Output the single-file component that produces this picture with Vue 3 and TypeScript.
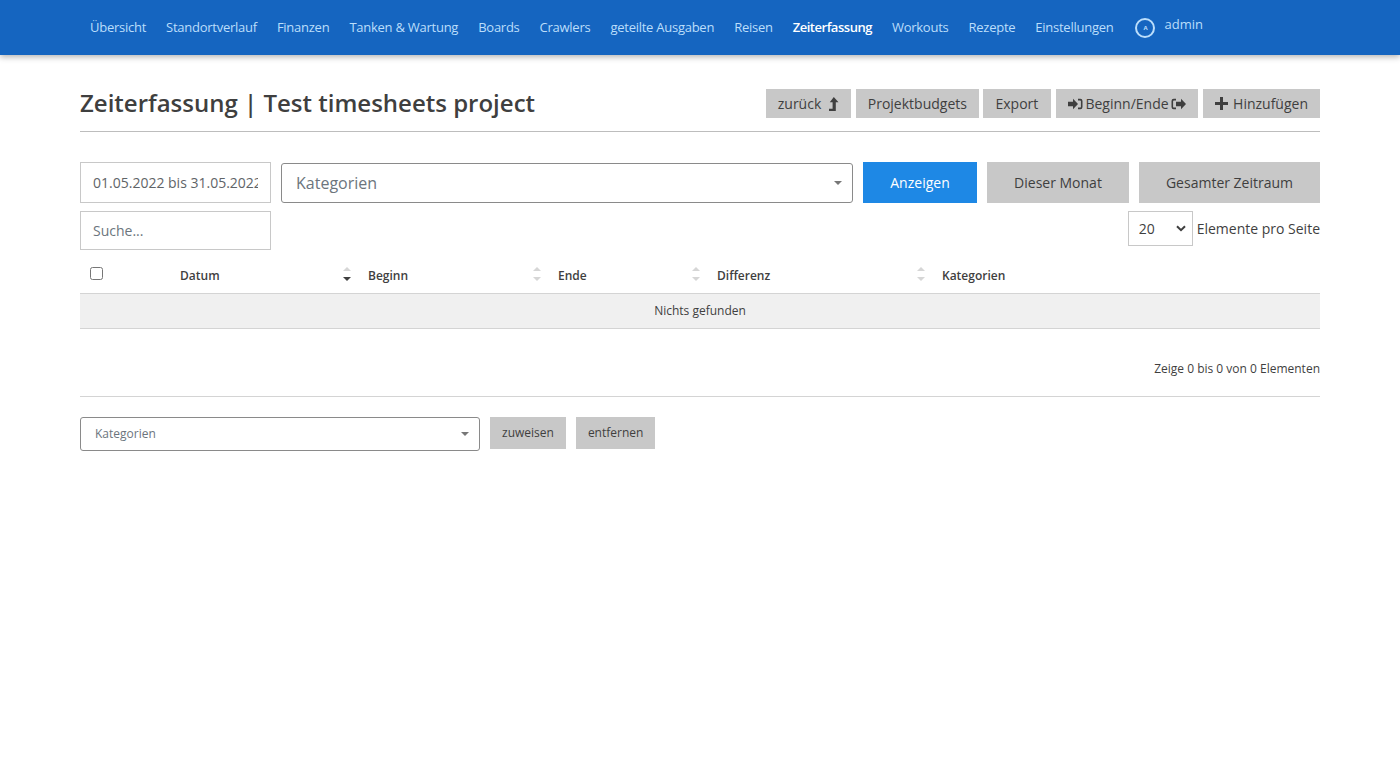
<template>
  <nav class="topbar">
    <div class="nav-inner">
      <a
        v-for="link in navLinks"
        :key="link"
        class="nav-link"
        :class="{ active: link === 'Zeiterfassung' }"
        href="#"
      >{{ link }}</a>
      <a class="nav-user" href="#">
        <span class="avatar">A</span>
        <span class="user-name">admin</span>
      </a>
    </div>
  </nav>

  <main class="page">
    <header class="page-head">
      <h1>Zeiterfassung | Test timesheets project</h1>
      <div class="head-actions">
        <button class="btn">
          zurück
          <svg class="ico ico-back" width="11" height="14" viewBox="0 0 11 14"><path d="M5.800 0 10.500 5.200H7.800V14H1V11.800H4.600V5.200H1.800z" fill="#3f3f3f" /></svg>
        </button>
        <button class="btn">Projektbudgets</button>
        <button class="btn btn-export">Export</button>
        <button class="btn btn-range">
          <svg class="ico" width="15" height="12" viewBox="0 0 15 12">
            <path d="M0 3.800h5V.8L10 6l-5 5.200v-3H0z" fill="#3f3f3f" />
            <path d="M10 .8h2.300q2.200 0 2.200 2.200v6q0 2.200-2.200 2.200H10V9.600h2q.9 0 .9-.9V3.300q0-.9-.9-.9h-2z" fill="#3f3f3f" />
          </svg>
          Beginn/Ende
          <svg class="ico" width="15" height="12" viewBox="0 0 15 12">
            <path d="M5 3.800h5V.8L15 6l-5 5.200v-3H5z" fill="#3f3f3f" />
            <path d="M5 .8H2.700Q.5.800.5 3v6q0 2.200 2.200 2.200H5V9.600H3q-.9 0-.9-.9V3.300q0-.9.9-.9h2z" fill="#3f3f3f" />
          </svg>
        </button>
        <button class="btn btn-add">
          <svg class="ico" width="13" height="13" viewBox="0 0 13 13"><path d="M5 0h3v5h5v3H8v5H5V8H0V5h5z" fill="#3f3f3f" /></svg>
          Hinzufügen
        </button>
      </div>
    </header>

    <section class="filters">
      <input class="date-input" type="text" value="01.05.2022 bis 31.05.2022" />
      <div class="select2 select-large">
        <span>Kategorien</span>
        <i class="caret"></i>
      </div>
      <button class="btn btn-lg btn-primary show-btn">Anzeigen</button>
      <button class="btn btn-lg month-btn">Dieser Monat</button>
      <button class="btn btn-lg all-btn">Gesamter Zeitraum</button>
    </section>

    <section class="toolbar">
      <input class="search-input" type="text" placeholder="Suche..." />
      <label class="page-size">
        <span class="select-wrap">
          <select>
            <option>20</option>
          </select>
          <svg class="chevron" width="10" height="7" viewBox="0 0 10 7"><path d="M1 1.200 5 5.200 9 1.200" fill="none" stroke="#3f3f3f" stroke-width="2" /></svg>
        </span>
        Elemente pro Seite
      </label>
    </section>

    <table class="grid">
      <colgroup>
        <col v-for="col in columns" :key="col.key" :style="{ width: col.width + 'px' }" />
      </colgroup>
      <thead>
        <tr>
          <th v-for="col in columns" :key="col.key" :class="{ 'check-col': col.key === 'check' }">
            <input v-if="col.key === 'check'" type="checkbox" />
            <template v-else>
              {{ col.label }}
              <span v-if="col.sortable" class="sort">
                <i class="up"></i>
                <i class="down" :class="{ on: col.key === 'date' }"></i>
              </span>
            </template>
          </th>
        </tr>
      </thead>
      <tbody>
        <tr>
          <td :colspan="columns.length">Nichts gefunden</td>
        </tr>
      </tbody>
    </table>

    <p class="summary">Zeige 0 bis 0 von 0 Elementen</p>

    <section class="assign">
      <div class="select2 select-small">
        <span>Kategorien</span>
        <i class="caret"></i>
      </div>
      <button class="btn btn-sm">zuweisen</button>
      <button class="btn btn-sm">entfernen</button>
    </section>
  </main>
</template>

<script setup lang="ts">
interface Column {
  key: string;
  label: string;
  width: number;
  sortable: boolean;
}

const navLinks: string[] = [
  'Übersicht',
  'Standortverlauf',
  'Finanzen',
  'Tanken & Wartung',
  'Boards',
  'Crawlers',
  'geteilte Ausgaben',
  'Reisen',
  'Zeiterfassung',
  'Workouts',
  'Rezepte',
  'Einstellungen',
];

const columns: Column[] = [
  { key: 'check', label: '', width: 88, sortable: false },
  { key: 'date', label: 'Datum', width: 188, sortable: true },
  { key: 'start', label: 'Beginn', width: 190, sortable: true },
  { key: 'end', label: 'Ende', width: 159, sortable: true },
  { key: 'diff', label: 'Differenz', width: 225, sortable: true },
  { key: 'cats', label: 'Kategorien', width: 390, sortable: false },
];
</script>

<style>
body {
  background: #fff;
}
</style>

<style scoped>
* {
  box-sizing: border-box;
}

.topbar {
  height: 55px;
  background: #1565c0;
  box-shadow: 0 2px 6px rgba(0, 0, 0, 0.3);
  font-family: "Open Sans", sans-serif;
}

.nav-inner {
  display: flex;
  align-items: center;
  height: 54px;
  padding-left: 80px;
}

.nav-link {
  padding: 0 10px;
  font-size: 13px;
  letter-spacing: -0.255px;
  color: #bbdefb;
  text-decoration: none;
}

.nav-link.active {
  color: #fff;
  font-weight: 600;
  letter-spacing: -0.48px;
}

.nav-user {
  display: flex;
  align-items: center;
  margin-left: 12px;
  font-size: 13px;
  color: #bbdefb;
  text-decoration: none;
}

.avatar {
  display: flex;
  align-items: center;
  justify-content: center;
  width: 20px;
  height: 20px;
  margin-top: 2px;
  border: 2px solid #bbdefb;
  border-radius: 50%;
  font-size: 6px;
  font-weight: 700;
}

.user-name {
  margin-left: 9px;
  position: relative;
  top: -3px;
}

.page {
  width: 1240px;
  margin: 0 auto;
  font-family: "Open Sans", sans-serif;
  color: #3f3f3f;
}

.page-head {
  display: flex;
  justify-content: space-between;
  align-items: flex-start;
  height: 77px;
  padding-top: 34px;
  border-bottom: 1px solid #bdbdbd;
}

h1 {
  margin: -1px 0 0;
  font-size: 24px;
  line-height: 30px;
  font-weight: 600;
  color: #3f3f3f;
}

.head-actions {
  display: flex;
  gap: 5px;
}

.btn {
  display: inline-flex;
  align-items: center;
  justify-content: center;
  gap: 3.500px;
  height: 29px;
  padding: 0 12px;
  border: 0;
  background: #c8c8c8;
  color: #3f3f3f;
  font-family: inherit;
  font-size: 14px;
}

.ico {
  flex: none;
}

.ico-back {
  margin-left: 3px;
}

.btn-export {
  width: 68px;
  margin-left: -1px;
  padding: 0;
}

.btn-range {
  gap: 2.500px;
}

.btn-add {
  gap: 5px;
}

.btn-lg {
  height: 41px;
}

.btn-primary {
  background: #1e88e5;
  color: #fff;
}

.show-btn {
  width: 114px;
}

.month-btn {
  width: 142px;
}

.all-btn {
  width: 181px;
}

.btn-sm {
  height: 32px;
  font-size: 12px;
}

.filters {
  display: flex;
  gap: 10px;
  margin-top: 30px;
}

input[type="text"] {
  width: 191px;
  padding: 0 12px;
  border: 1px solid #c8c8c8;
  border-radius: 0;
  outline: none;
  background: #fff;
  font-family: inherit;
  font-size: 14px;
  color: #5f6468;
}

input[type="text"]::placeholder {
  color: #6c757d;
  opacity: 1;
}

.date-input {
  height: 41px;
}

.select2 {
  display: flex;
  align-items: center;
  justify-content: space-between;
  background: #fff;
  border: 1px solid #8a8a8a;
  border-radius: 3px;
  color: #6c757d;
}

.select-large {
  flex: none;
  width: 572px;
  height: 40px;
  margin-top: 1px;
  padding: 0 10px 0 14px;
  font-size: 16px;
}

.select-small {
  width: 400px;
  height: 34px;
  padding: 0 10px 0 14px;
  font-size: 12px;
}

.caret {
  width: 0;
  height: 0;
  border-left: 4px solid transparent;
  border-right: 4px solid transparent;
  border-top: 4px solid #777;
}

.toolbar {
  display: flex;
  justify-content: space-between;
  margin-top: 8px;
}

.search-input {
  height: 39px;
}

.page-size {
  display: flex;
  align-items: center;
  gap: 4px;
  height: 35px;
  font-size: 14px;
  color: #3f3f3f;
}

.select-wrap {
  position: relative;
  display: block;
  height: 35px;
}

.page-size select {
  display: block;
  width: 65px;
  height: 35px;
  padding-left: 10px;
  border: 1px solid #c8c8c8;
  border-radius: 0;
  outline: none;
  appearance: none;
  background: #fff;
  font-family: inherit;
  font-size: 14px;
  color: #3f3f3f;
}

.chevron {
  position: absolute;
  right: 7px;
  top: 14px;
  pointer-events: none;
}

.grid {
  width: 1240px;
  table-layout: fixed;
  border-collapse: collapse;
  margin-top: 5px;
  font-size: 12px;
}

.grid th {
  position: relative;
  height: 38px;
  padding: 4px 12px 0;
  text-align: left;
  font-weight: 600;
  color: #3f3f3f;
  border-bottom: 1px solid #d4d4d4;
}

.grid th.check-col {
  padding: 0 0 0 10px;
}

.grid th input {
  display: block;
  width: 13px;
  height: 13px;
  margin: 0;
}

.grid td {
  height: 35px;
  padding: 0;
  text-align: center;
  background: #f0f0f0;
  border-bottom: 1px solid #d4d4d4;
  color: #3f3f3f;
}

.sort {
  position: absolute;
  right: 5px;
  top: 12px;
  display: flex;
  flex-direction: column;
  gap: 6px;
}

.sort i {
  width: 0;
  height: 0;
  border-left: 4px solid transparent;
  border-right: 4px solid transparent;
}

.sort .up {
  border-bottom: 4px solid #d6d6d6;
}

.sort .down {
  border-top: 4px solid #d6d6d6;
}

.sort .down.on {
  border-top-color: #3f3f3f;
}

.summary {
  height: 68px;
  margin: 0;
  padding-top: 31px;
  text-align: right;
  font-size: 12px;
  line-height: 17px;
  border-bottom: 1px solid #d4d4d4;
}

.assign {
  display: flex;
  gap: 10px;
  margin-top: 20px;
}
</style>
